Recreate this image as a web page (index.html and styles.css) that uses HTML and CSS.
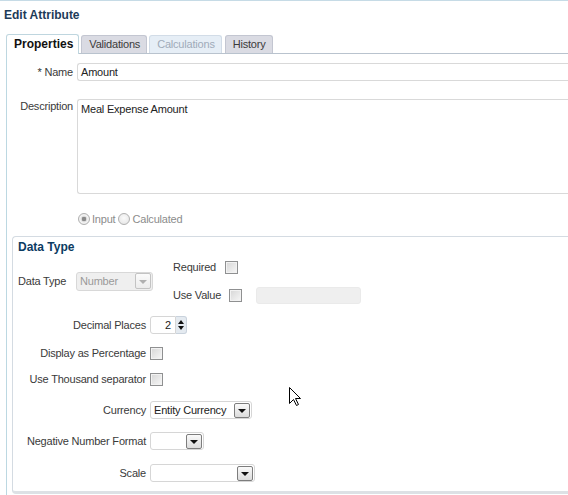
FILE: index.html
```html
<!DOCTYPE html>
<html>
<head>
<meta charset="utf-8">
<title>Edit Attribute</title>
<link rel="stylesheet" href="styles.css">
</head>
<body>
<div class="page">
  <div class="title">Edit Attribute</div>
  <div class="tabs">
    <div class="tab active">Properties</div>
    <div class="tab">Validations</div>
    <div class="tab disabled">Calculations</div>
    <div class="tab">History</div>
  </div>
  <div class="panel">
    <div class="row name-row">
      <div class="lbl"><span class="req">*</span> Name</div>
      <div class="input wide">Amount</div>
    </div>
    <div class="row desc-row">
      <div class="lbl">Description</div>
      <div class="textarea">Meal Expense Amount</div>
    </div>
    <div class="row radio-row">
      <div class="lbl"></div>
      <div class="radios">
        <span class="radio on"></span><span class="rlabel">Input</span>
        <span class="radio"></span><span class="rlabel">Calculated</span>
      </div>
    </div>

    <section class="box">
      <h2 class="box-title">Data Type</h2>
      <div class="top">
        <div class="dt">
          <span class="dt-label">Data Type</span>
          <div class="select disabled w-number"><span class="val">Number</span><span class="btn"><span class="tri"></span></span></div>
        </div>
        <div class="flags">
          <div class="flag"><span class="flag-label req-label">Required</span><span class="check"></span></div>
          <div class="flag uv"><span class="flag-label uv-label">Use Value</span><span class="check"></span><span class="dinput"></span></div>
        </div>
      </div>

      <div class="frow r-dec">
        <div class="flabel">Decimal Places</div>
        <div class="spin"><span class="spin-input">2</span><span class="spin-btns"><span class="up"></span><span class="down"></span></span></div>
      </div>
      <div class="frow r-pct">
        <div class="flabel">Display as Percentage</div>
        <span class="check"></span>
      </div>
      <div class="frow r-thou">
        <div class="flabel">Use Thousand separator</div>
        <span class="check"></span>
      </div>
      <div class="frow r-cur">
        <div class="flabel">Currency</div>
        <div class="select w-cur"><span class="val">Entity Currency</span><span class="btn"><span class="tri"></span></span></div>
      </div>
      <div class="frow r-neg">
        <div class="flabel">Negative Number Format</div>
        <div class="select w-neg"><span class="val"></span><span class="btn"><span class="tri"></span></span></div>
      </div>
      <div class="frow r-scale">
        <div class="flabel">Scale</div>
        <div class="select w-scale"><span class="val"></span><span class="btn"><span class="tri"></span></span></div>
      </div>
    </section>
  </div>
</div>
<svg class="cursor" width="13" height="20" viewBox="0 0 13 20">
  <path d="M0.5 0.5 L0.5 16.5 L4.5 12.5 L7.5 18.5 L9.5 17.5 L6.5 11.5 L11.5 11.5 Z" fill="#fff" stroke="#000" stroke-width="1" stroke-linejoin="miter"/>
</svg>
</body>
</html>
```

FILE: styles.css
```css
html, body {
  margin: 0;
  padding: 0;
  overflow: hidden;
  background: #fff;
}
body {
  font-family: "Liberation Sans", Arial, sans-serif;
  font-size: 11px;
  letter-spacing: -0.2px;
  color: #3a3a3a;
  position: relative;
  width: 568px;
  height: 495px;
}
.page {
  width: 568px;
  border-top: 1px solid #c6dbe6;
}
.title {
  padding: 7px 0 0 4px;
  line-height: 14px;
  font-size: 12px;
  font-weight: bold;
  letter-spacing: 0;
  color: #1d3b58;
}

/* tabs */
.tabs {
  display: flex;
  align-items: flex-end;
  margin: 12px 0 0 6px;
  height: 19px;
  border-bottom: 1px solid #b9c3ce;
}
.tab {
  box-sizing: border-box;
  height: 18px;
  line-height: 17px;
  padding: 0 6px 0 7px;
  margin-right: 2px;
  background: #dadbe3;
  border: 1px solid #c3c6d1;
  border-bottom: none;
  border-radius: 3px 3px 0 0;
  color: #3a3a3a;
}
.tab.active {
  height: 20px;
  margin-bottom: -1px;
  line-height: 19px;
  padding: 0 5px 0 7px;
  background: #fff;
  border-color: #bfd6df;
  font-size: 12px;
  font-weight: bold;
  letter-spacing: 0;
  color: #111;
}
.tab.disabled {
  background: #e6eef6;
  border-color: #d2dce7;
  color: #a0abb9;
  margin-right: 3px;
}

/* panel */
.panel {
  border-left: 1px solid #bcd8e2;
  margin-left: 6px;
  padding-top: 9px;
  padding-bottom: 1px;
}
.row {
  display: flex;
}
.lbl {
  width: 66px;
  margin-right: 4px;
  text-align: right;
  line-height: 18px;
  flex: none;
}
.desc-row .lbl {
  line-height: 14px;
}
.req {
  color: #333;
}
.input {
  box-sizing: border-box;
  height: 18px;
  line-height: 16px;
  border: 1px solid #d9d9d9;
  border-right: none;
  border-radius: 3px 0 0 3px;
  padding: 0 3px;
  color: #222;
}
.wide {
  flex: 1;
}
.desc-row {
  margin-top: 18px;
}
.textarea {
  box-sizing: border-box;
  flex: 1;
  height: 95px;
  border: 1px solid #d9d9d9;
  border-right: none;
  border-radius: 3px 0 0 3px;
  padding: 2px 3px;
  line-height: 14px;
  color: #222;
}
.radio-row {
  margin-top: 18px;
  height: 14px;
}
.radios {
  display: flex;
  align-items: center;
  margin-left: 1px;
  height: 14px;
}
.radio {
  box-sizing: border-box;
  width: 12px;
  height: 12px;
  border-radius: 50%;
  border: 1px solid #b0b0b0;
  background: radial-gradient(circle at 50% 40%, #fbfbfb, #e2e2e2);
}
.radio.on {
  background: radial-gradient(circle, #8a8a8a 0, #8a8a8a 2px, #d8d8d8 2.5px, #f6f6f6 4px, #e4e4e4 6px);
}
.rlabel {
  color: #8c8c8c;
  margin: 0 3px 0 2px;
}

/* data type box */
.box {
  margin: 10px 0 0 5px;
  border: 1px solid #d4dbe2;
  border-bottom: 3px solid #dde1e5;
  border-right: none;
  border-radius: 4px 0 0 4px;
  padding-bottom: 9px;
}
.box-title {
  margin: 0;
  padding: 3px 0 0 5px;
  font-size: 12px;
  line-height: 14px;
  font-weight: bold;
  letter-spacing: 0;
  color: #0c3b62;
}
.top {
  display: flex;
  align-items: center;
  margin-top: 4px;
  padding-left: 5px;
}
.dt {
  display: flex;
  align-items: center;
}
.dt-label {
  width: 58px;
}
.flags {
  margin-left: 20px;
}
.flag {
  display: flex;
  align-items: center;
  height: 18px;
}
.flag + .flag {
  margin-top: 10px;
}
.req-label {
  width: 52px;
}
.uv-label {
  width: 56px;
}
.check {
  box-sizing: border-box;
  display: inline-block;
  flex: none;
  width: 13px;
  height: 13px;
  border: 1px solid #8f9091;
  background: linear-gradient(135deg, #d6d6d6, #f7f7f7);
  box-shadow: inset 0 0 0 1px #f2f2f2;
}
.dinput {
  box-sizing: border-box;
  width: 105px;
  height: 17px;
  margin-left: 14px;
  background: #efefef;
  border: 1px solid #eaeaea;
  border-radius: 3px;
}

/* select */
.select {
  box-sizing: border-box;
  display: flex;
  align-items: center;
  height: 18px;
  border: 1px solid #d6d6d6;
  border-radius: 3px;
  background: #fff;
  color: #222;
}
.select .val {
  flex: 1;
  padding-left: 3px;
  white-space: nowrap;
  overflow: hidden;
}
.select .btn {
  box-sizing: border-box;
  flex: none;
  display: flex;
  align-items: center;
  justify-content: center;
  width: 16px;
  height: 15px;
  margin-right: 1px;
  border: 1px solid #7d7d7d;
  border-radius: 2px;
  background: linear-gradient(#fafafa, #dcdcdc);
}
.tri {
  width: 0;
  height: 0;
  border-left: 4px solid transparent;
  border-right: 4px solid transparent;
  border-top: 4px solid #111;
  margin-top: 1px;
}
.select.disabled {
  height: 19px;
  background: #efefef;
  border-color: #d8d8d8;
  color: #9a9a9a;
}
.select.disabled .btn {
  height: 16px;
  border-color: #c3c3c3;
  background: linear-gradient(#fbfbfb, #ececec);
}
.select.disabled .tri {
  border-top-color: #b0b0b0;
}
.w-number { width: 77px; }
.w-cur { width: 102px; }
.w-neg { width: 54px; }
.w-scale { width: 105px; }

/* lower form rows */
.frow {
  display: flex;
  align-items: center;
  height: 18px;
}
.flabel {
  width: 133px;
  margin-right: 4px;
  text-align: right;
  flex: none;
  white-space: nowrap;
}
.r-dec { margin-top: 12px; }
.r-pct { margin-top: 10px; }
.r-thou { margin-top: 8px; }
.r-cur { margin-top: 13px; }
.r-neg { margin-top: 13px; }
.r-scale { margin-top: 14px; }

.spin {
  display: flex;
  align-items: center;
  height: 18px;
}
.spin-input {
  box-sizing: border-box;
  width: 26px;
  height: 18px;
  line-height: 16px;
  border: 1px solid #d6d6d6;
  border-radius: 3px 0 0 3px;
  text-align: right;
  padding-right: 4px;
  color: #222;
}
.spin-btns {
  box-sizing: border-box;
  display: flex;
  flex-direction: column;
  align-items: center;
  justify-content: space-evenly;
  width: 11px;
  height: 18px;
  border: 1px solid #c9d2dc;
  border-left: none;
  border-radius: 0 3px 3px 0;
  background: #e4eaf0;
}
.up {
  width: 0;
  height: 0;
  border-left: 3px solid transparent;
  border-right: 3px solid transparent;
  border-bottom: 4px solid #111;
}
.down {
  width: 0;
  height: 0;
  border-left: 3px solid transparent;
  border-right: 3px solid transparent;
  border-top: 4px solid #111;
}

/* mouse pointer overlay */
.cursor {
  position: absolute;
  left: 289px;
  top: 387px;
}
```
